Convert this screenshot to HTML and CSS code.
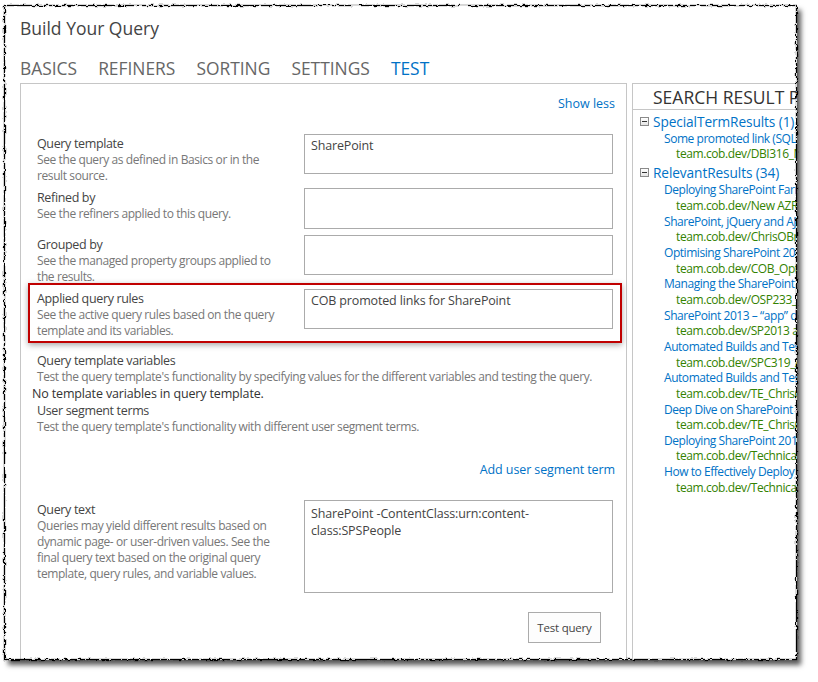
FILE: index.html
```html
<!DOCTYPE html>
<html lang="en">
<head>
<meta charset="utf-8">
<title>Build Your Query</title>
<link rel="stylesheet" href="styles.css">
</head>
<body>
<div class="stage">
  <div class="frame">
    <div class="page">
      <h1 class="title">Build Your Query</h1>
      <nav class="tabs">
        <span class="tab">BASICS</span>
        <span class="tab">REFINERS</span>
        <span class="tab">SORTING</span>
        <span class="tab">SETTINGS</span>
        <span class="tab active">TEST</span>
      </nav>
      <div class="panels">
        <section class="left">
          <div class="linkline top"><a class="link">Show less</a></div>

          <div class="row first">
            <div class="lbl">
              <div class="name">Query template</div>
              <div class="desc">See the query as defined in Basics or in the<br>result source.</div>
            </div>
            <div class="box">SharePoint</div>
          </div>

          <div class="row">
            <div class="lbl">
              <div class="name">Refined by</div>
              <div class="desc">See the refiners applied to this query.</div>
            </div>
            <div class="box tall"></div>
          </div>

          <div class="row spaced">
            <div class="lbl">
              <div class="name">Grouped by</div>
              <div class="desc">See the managed property groups applied to<br>the results.</div>
            </div>
            <div class="box"></div>
          </div>

          <div class="row hl">
            <div class="lbl">
              <div class="name">Applied query rules</div>
              <div class="desc">See the active query rules based on the query<br>template and its variables.</div>
            </div>
            <div class="box">COB promoted links for SharePoint</div>
          </div>

          <div class="block">
            <div class="name">Query template variables</div>
            <div class="desc nowrap">Test the query template's functionality by specifying values for the different variables and testing the query.</div>
            <div class="note">No template variables in query template.</div>
            <div class="name">User segment terms</div>
            <div class="desc nowrap">Test the query template's functionality with different user segment terms.</div>
          </div>

          <div class="linkline add"><a class="link big">Add user segment term</a></div>

          <div class="row qtext">
            <div class="lbl">
              <div class="name">Query text</div>
              <div class="desc">Queries may yield different results based on<br>dynamic page- or user-driven values. See the<br>final query text based on the original query<br>template, query rules, and variable values.</div>
            </div>
            <div class="box huge">SharePoint -ContentClass:urn:content-<br>class:SPSPeople</div>
          </div>

          <div class="btnline"><button class="btn">Test query</button></div>
        </section>

        <section class="right">
          <div class="rhead">SEARCH RESULT PREVIEW</div>
          <div class="results">
            <div class="group"><span class="toggle"></span>SpecialTermResults (1)</div>
            <div class="item">Some promoted link (SQL Server Tips)</div>
            <div class="url">team.cob.dev/DBI316_Microsoft</div>
            <div class="group second"><span class="toggle"></span>RelevantResults (34)</div>
            <div class="item">Deploying SharePoint Farms on Azure</div>
            <div class="url">team.cob.dev/New AZR Deploy</div>
            <div class="item">SharePoint, jQuery and AJAX</div>
            <div class="url">team.cob.dev/ChrisOBrien</div>
            <div class="item">Optimising SharePoint 2010</div>
            <div class="url">team.cob.dev/COB_Optimising</div>
            <div class="item">Managing the SharePoint Dev</div>
            <div class="url">team.cob.dev/OSP233_Managing</div>
            <div class="item">SharePoint 2013 – “app” dev</div>
            <div class="url">team.cob.dev/SP2013 apps</div>
            <div class="item">Automated Builds and Testing</div>
            <div class="url">team.cob.dev/SPC319_Automated</div>
            <div class="item">Automated Builds and Testing</div>
            <div class="url">team.cob.dev/TE_ChrisGreen</div>
            <div class="item">Deep Dive on SharePoint Ribbon</div>
            <div class="url">team.cob.dev/TE_ChrisGreen2</div>
            <div class="item">Deploying SharePoint 2010</div>
            <div class="url">team.cob.dev/TechnicalEd</div>
            <div class="item">How to Effectively Deploy Apps</div>
            <div class="url">team.cob.dev/TechnicalEd2</div>
          </div>
        </section>
      </div>
    </div>
  </div>
  <svg class="edge" width="818" height="682" viewBox="0 0 818 682" aria-hidden="true">
    <defs>
      <filter id="torn" x="-2%" y="-2%" width="104%" height="104%">
        <feTurbulence type="fractalNoise" baseFrequency="0.22" numOctaves="2" seed="7" result="noise"/>
        <feDisplacementMap in="SourceGraphic" in2="noise" scale="4" xChannelSelector="R" yChannelSelector="G"/>
      </filter>
    </defs>
    <rect x="4.5" y="5.5" width="792" height="654" fill="none" stroke="#000" stroke-width="1.3" filter="url(#torn)"/>
  </svg>
</div>
</body>
</html>
```

FILE: styles.css
```css
* { box-sizing: border-box; }

body {
  margin: 0;
  background: #fff;
  font-family: "Open Sans", "Liberation Sans", sans-serif;
  color: #444;
}

.stage {
  position: relative;
  width: 818px;
  height: 682px;
  padding: 5px 0 0 4px;
  overflow: hidden;
}

.frame {
  width: 793px;
  height: 655px;
  background: #fff;
  overflow: hidden;
  box-shadow: 4px 5px 5px rgba(0, 0, 0, 0.65);
}

.edge {
  position: absolute;
  left: 0;
  top: 0;
  pointer-events: none;
}

.page {
  padding: 11px 0 0 16px;
}

.title {
  margin: 0;
  font-size: 17.5px;
  font-weight: 400;
  line-height: 24px;
  color: #444;
}

.tabs {
  display: flex;
  gap: 21px;
  margin-top: 16px;
  font-size: 17.4px;
  line-height: 24px;
  color: #666;
}

.tab.active { color: #0072c6; }

.panels {
  display: flex;
  gap: 5px;
  margin-top: 3px;
}

.left {
  width: 607px;
  height: 640px;
  flex: none;
  border: 1px solid #c6c6c6;
  padding: 10px 13px 0 16px;
}

.right {
  flex: 1;
  height: 640px;
  border: 1px solid #c6c6c6;
  border-right: 0;
  white-space: nowrap;
  overflow: hidden;
}

.link {
  color: #0072c6;
  font-size: 12.5px;
  line-height: 16px;
}

.link.big {
  font-size: 12.5px;
  letter-spacing: -0.1px;
}

.linkline {
  text-align: right;
  margin-right: -2px;
  line-height: 16px;
}

.row {
  display: flex;
  justify-content: space-between;
  align-items: flex-start;
}

.row + .row { margin-top: 5px; }
.row.first { margin-top: 22px; }
.row.spaced { margin-top: 6px; }

.lbl {
  width: 255px;
  padding-top: 2px;
  margin-bottom: -1px;
  white-space: nowrap;
}

.name {
  font-size: 12.5px;
  letter-spacing: -0.35px;
  line-height: 16px;
  color: #444;
}

.desc {
  font-size: 12px;
  letter-spacing: -0.4px;
  line-height: 16px;
  color: #777;
}

.nowrap { white-space: nowrap; }

.box {
  width: 309px;
  height: 40px;
  flex: none;
  border: 1px solid #ababab;
  padding: 3px 6px;
  font-size: 12.5px;
  letter-spacing: -0.15px;
  line-height: 16px;
  color: #444;
}

.box.tall { height: 41px; }
.box.huge { height: 93px; padding-top: 4px; line-height: 17px; }

.row.hl {
  margin: -1px -9px 0;
  border: 2px solid #c00000;
  padding: 4px 7px 3px;
  box-shadow: 0 2px 6px rgba(0, 0, 0, 0.35);
}

.block { margin-top: 10px; }

.note {
  margin-left: -5px;
  font-size: 12.5px;
  letter-spacing: -0.15px;
  line-height: 18px;
  color: #333;
}

.linkline.add { margin-top: 25px; }

.row.qtext { margin-top: 22px; }

.btnline {
  text-align: right;
  margin-top: 19px;
  padding-right: 12px;
}

.btn {
  width: 73px;
  height: 31px;
  border: 1px solid #ababab;
  background: #fdfdfd;
  font-family: "Open Sans", "Liberation Sans", sans-serif;
  font-size: 11.5px;
  letter-spacing: -0.2px;
  color: #444;
  padding: 0;
}

.rhead {
  height: 26px;
  border-bottom: 1px solid #c6c6c6;
  padding: 1px 0 0 20px;
  font-size: 17.5px;
  line-height: 24px;
  color: #333;
}

.results {
  padding: 3px 0 0 7px;
}

.group {
  display: flex;
  align-items: center;
  gap: 4px;
  font-size: 13.7px;
  letter-spacing: -0.1px;
  line-height: 17.5px;
  color: #0072c6;
}

.group.second { margin-top: 2px; margin-bottom: 1px; }

.toggle {
  position: relative;
  width: 9px;
  height: 9px;
  flex: none;
  border: 1px solid #8a8a8a;
  background: linear-gradient(#fff, #e4e4e4);
}

.toggle::after {
  content: "";
  position: absolute;
  left: 1px;
  right: 1px;
  top: 3px;
  height: 1px;
  background: #333;
}

.item {
  padding-left: 24px;
  font-size: 12px;
  letter-spacing: -0.45px;
  line-height: 15.65px;
  color: #0072c6;
}

.url {
  padding-left: 36px;
  font-size: 12px;
  letter-spacing: -0.4px;
  line-height: 15.65px;
  color: #338200;
}
```
